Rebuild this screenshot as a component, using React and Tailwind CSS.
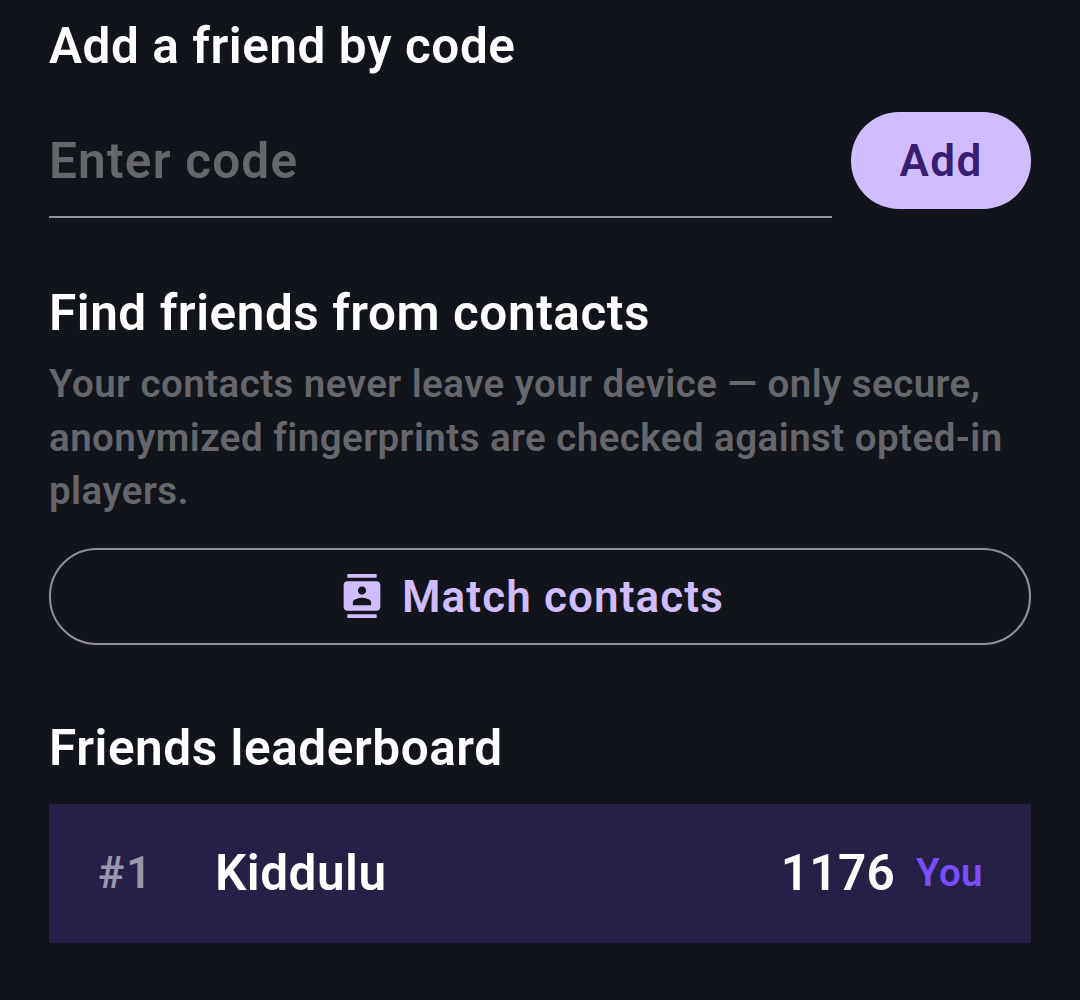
const sectionTitle = 'text-[49.5px] leading-[58px] tracking-[0.55px] font-semibold text-white';

function ContactsIcon() {
  return (
    <svg viewBox="0 0 24 24" fill="currentColor" className="w-[44px] h-[44px]">
      <path d="M20 0H4v2h16V0zM4 24h16v-2H4v2zM20 4H4c-1.1 0-2 .9-2 2v12c0 1.1.9 2 2 2h16c1.1 0 2-.9 2-2V6c0-1.1-.9-2-2-2zm-8 2.75c1.24 0 2.25 1.01 2.25 2.25s-1.01 2.25-2.25 2.25S9.75 10.24 9.75 9 10.76 6.75 12 6.75zM17 17H7v-1.5c0-1.67 3.33-2.5 5-2.5s5 .83 5 2.5V17z" />
    </svg>
  );
}

export default function App() {
  return (
    <div className="w-[1080px] h-[1000px] overflow-hidden bg-[#11141b] px-[49px] pt-[17px] font-['Roboto',sans-serif]">
      <h2 className={sectionTitle}>Add a friend by code</h2>

      <div className="flex items-start gap-[19px] mt-[37px]">
        <div className="flex-1 h-[106px] border-b-2 border-[#938f99] pt-[24px]">
          <span className="block text-[49.5px] leading-[50px] tracking-[1.2px] font-semibold text-[#65676c]">Enter code</span>
        </div>
        <button className="w-[180px] h-[97px] rounded-[48px] bg-[#d0bcff] text-[#381e72] text-[44px] tracking-[1.4px] font-semibold">
          Add
        </button>
      </div>

      <h2 className={`${sectionTitle} mt-[66px]`}>Find friends from contacts</h2>
      <p className="mt-[15px] text-[38.5px] leading-[53.5px] tracking-[0.45px] font-semibold text-[#65676c]">
        Your contacts never leave your device — only secure, anonymized fingerprints are checked against opted-in players.
      </p>

      <button className="mt-[30px] w-full h-[97px] rounded-[48px] border-2 border-[#938f99] flex items-center justify-center gap-[18px] pr-[16px] text-[#d0bcff] text-[44px] tracking-[1.1px] font-semibold">
        <ContactsIcon />
        <span className="pt-[2px]">Match contacts</span>
      </button>

      <h2 className={`${sectionTitle} mt-[74px]`}>Friends leaderboard</h2>

      <div className="mt-[27px] h-[139px] bg-[#262047] flex items-center pl-[49px] pr-[48px]">
        <span className="w-[117px] text-[44px] tracking-[2px] font-semibold text-[#9a96ac]">#1</span>
        <span className="flex-1 text-[49.5px] tracking-[0.5px] font-semibold text-white">Kiddulu</span>
        <span className="text-[49.5px] tracking-[0.3px] font-semibold text-white">1176</span>
        <span className="ml-[21px] text-[38.5px] tracking-[0.4px] font-semibold text-[#7c4dff]">You</span>
      </div>
    </div>
  );
}
